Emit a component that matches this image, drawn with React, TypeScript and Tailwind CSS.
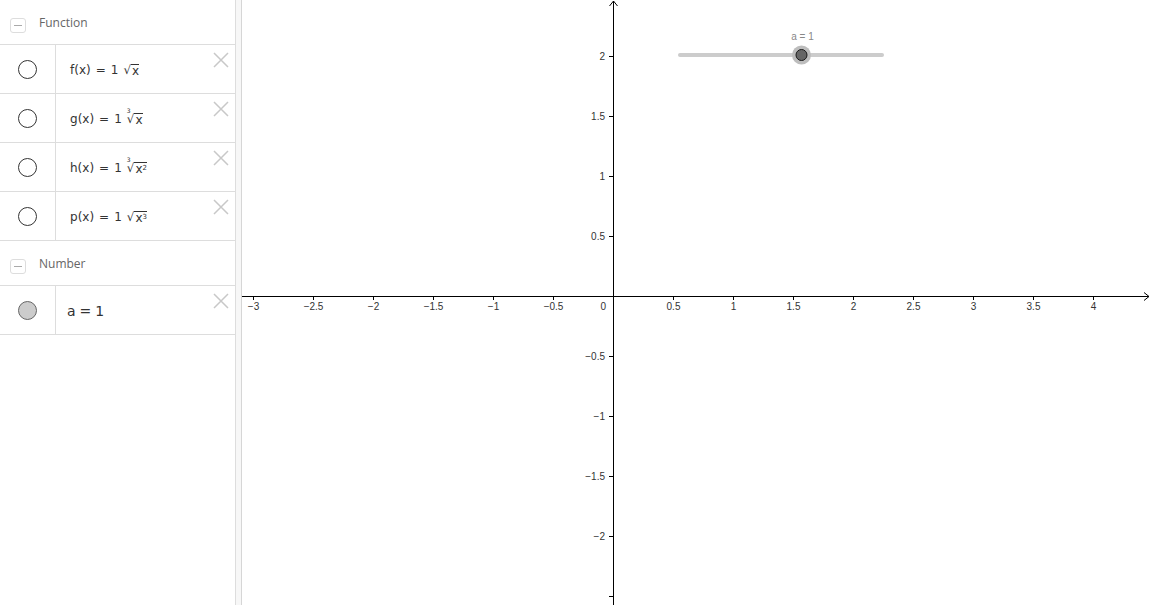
import React, { ReactNode } from 'react';

const mathFont = { fontFamily: '"DejaVu Sans", "Liberation Sans", sans-serif' };

function Root({ index, children }: { index?: string; children: ReactNode }) {
  return (
    <span className="relative inline-flex items-start">
      {index && (
        <span className="absolute left-0 top-[-4px] text-[6px] leading-none">{index}</span>
      )}
      <span className="text-[12px] leading-[15px]">√</span>
      <span className="mt-[1px] border-t border-[#333] pl-[1px] text-[12px] leading-[13px]">
        {children}
      </span>
    </span>
  );
}

function Header({ title }: { title: string }) {
  return (
    <div className="flex h-[45px] items-center border-b border-[#dddddd] pl-[10px]">
      <span className="mt-[6px] flex h-[15px] w-[16px] items-center justify-center rounded-[3px] border border-[#dddddd]">
        <span className="h-px w-[8px] bg-[#aaaaaa]" />
      </span>
      <span
        className="ml-[13px] mt-[2px] text-[12px] text-[#666666]"
        style={{ fontFamily: '"Open Sans", sans-serif' }}
      >
        {title}
      </span>
    </div>
  );
}

function DeleteIcon() {
  return (
    <svg width="16" height="16" viewBox="0 0 16 16" className="absolute right-[6px] top-[7px]">
      <path d="M1 1 L15 15 M15 1 L1 15" stroke="#c8c8c8" strokeWidth="1.5" fill="none" />
    </svg>
  );
}

function Row({
  children,
  filled = false,
  big = false,
}: {
  children: ReactNode;
  filled?: boolean;
  big?: boolean;
}) {
  return (
    <div className="relative flex h-[49px] border-b border-[#dddddd]">
      <div className="flex w-[56px] items-center justify-center border-r border-[#dddddd]">
        <span
          className={`h-[19px] w-[19px] rounded-full border ${
            filled ? 'border-[#666666] bg-[#cccccc]' : 'border-[#333333] bg-white'
          }`}
        />
      </div>
      <div
        className={`flex items-center pt-[2px] text-[#333333] ${big ? 'pl-[11px] text-[14px]' : 'pl-[14px] text-[12px]'}`}
        style={mathFont}
      >
        {children}
      </div>
      <DeleteIcon />
    </div>
  );
}

function Expr({ name, root }: { name: string; root: ReactNode }) {
  return (
    <>
      <span>{name}(x)</span>
      <span className="mx-[5px]">=</span>
      <span>1</span>
      <span className="ml-[5px]">{root}</span>
    </>
  );
}

const UNIT = 120;
const OX = 614;
const OY = 296;

function fmt(v: number) {
  const s = Math.abs(v).toString();
  return v < 0 ? `−${s}` : s;
}

function Graph() {
  const xs: number[] = [];
  for (let v = -3; v <= 4; v += 0.5) if (v !== 0) xs.push(v);
  const ys: number[] = [];
  for (let v = -2.5; v <= 2; v += 0.5) if (v !== 0) ys.push(v);

  return (
    <svg width="909" height="605" viewBox="243 0 909 605" className="block">
      <g stroke="#000" strokeWidth="1" fill="none">
        <line x1="243" y1={OY + 0.5} x2="1150" y2={OY + 0.5} />
        <path d={`M1145 ${OY - 3.5} L1150 ${OY + 0.5} L1145 ${OY + 4.5}`} />
        <line x1={OX + 0.5} y1="1" x2={OX + 0.5} y2="605" />
        <path d={`M${OX - 3.5} 6 L${OX + 0.5} 1 L${OX + 4.5} 6`} />
        {xs.map((v) => (
          <line key={`xt${v}`} x1={OX + v * UNIT + 0.5} y1={OY} x2={OX + v * UNIT + 0.5} y2={OY + 4} />
        ))}
        {ys.map((v) => (
          <line key={`yt${v}`} x1={OX - 4} y1={OY - v * UNIT + 0.5} x2={OX} y2={OY - v * UNIT + 0.5} />
        ))}
      </g>
      <g fill="#333" fontSize="10" fontFamily="Liberation Sans, Arial, sans-serif">
        {xs.map((v) => (
          <text key={`xl${v}`} x={OX + v * UNIT + 0.5} y={OY + 14} textAnchor="middle">
            {fmt(v)}
          </text>
        ))}
        <text x={OX - 7} y={OY + 14} textAnchor="end">0</text>
        {ys
          .filter((v) => v >= -2)
          .map((v) => (
            <text key={`yl${v}`} x={OX - 8} y={OY - v * UNIT + 4} textAnchor="end">
              {fmt(v)}
            </text>
          ))}
      </g>
      <g>
        <line x1="681" y1="55" x2="883" y2="55" stroke="#cccccc" strokeWidth="4" strokeLinecap="round" />
        <circle cx="802.5" cy="55" r="9.5" fill="#bdbdbd" />
        <circle cx="802.5" cy="55" r="5.5" fill="#666666" stroke="#1a1a1a" strokeWidth="1" />
        <text
          x="803.5"
          y="39.5"
          textAnchor="middle"
          fontSize="10"
          fill="#888"
          fontFamily="Liberation Sans, Arial, sans-serif"
        >
          a = 1
        </text>
      </g>
    </svg>
  );
}

export default function App() {
  return (
    <div className="flex h-[605px] w-[1152px] overflow-hidden bg-white">
      <aside className="flex w-[236px] flex-col border-r border-[#dddddd]">
        <Header title="Function" />
        <Row>
          <Expr name="f" root={<Root>x</Root>} />
        </Row>
        <Row>
          <Expr name="g" root={<Root index="3">x</Root>} />
        </Row>
        <Row>
          <Expr
            name="h"
            root={
              <Root index="3">
                x<sup className="text-[7px]">2</sup>
              </Root>
            }
          />
        </Row>
        <Row>
          <Expr
            name="p"
            root={
              <Root>
                x<sup className="text-[7px]">3</sup>
              </Root>
            }
          />
        </Row>
        <Header title="Number" />
        <Row filled big>
          <span>a</span>
          <span className="mx-[4px]">=</span>
          <span>1</span>
        </Row>
      </aside>
      <div className="w-[6px] border-r border-[#d6d6d6] bg-[#f7f7f7]" />
      <main className="flex-1">
        <Graph />
      </main>
    </div>
  );
}
